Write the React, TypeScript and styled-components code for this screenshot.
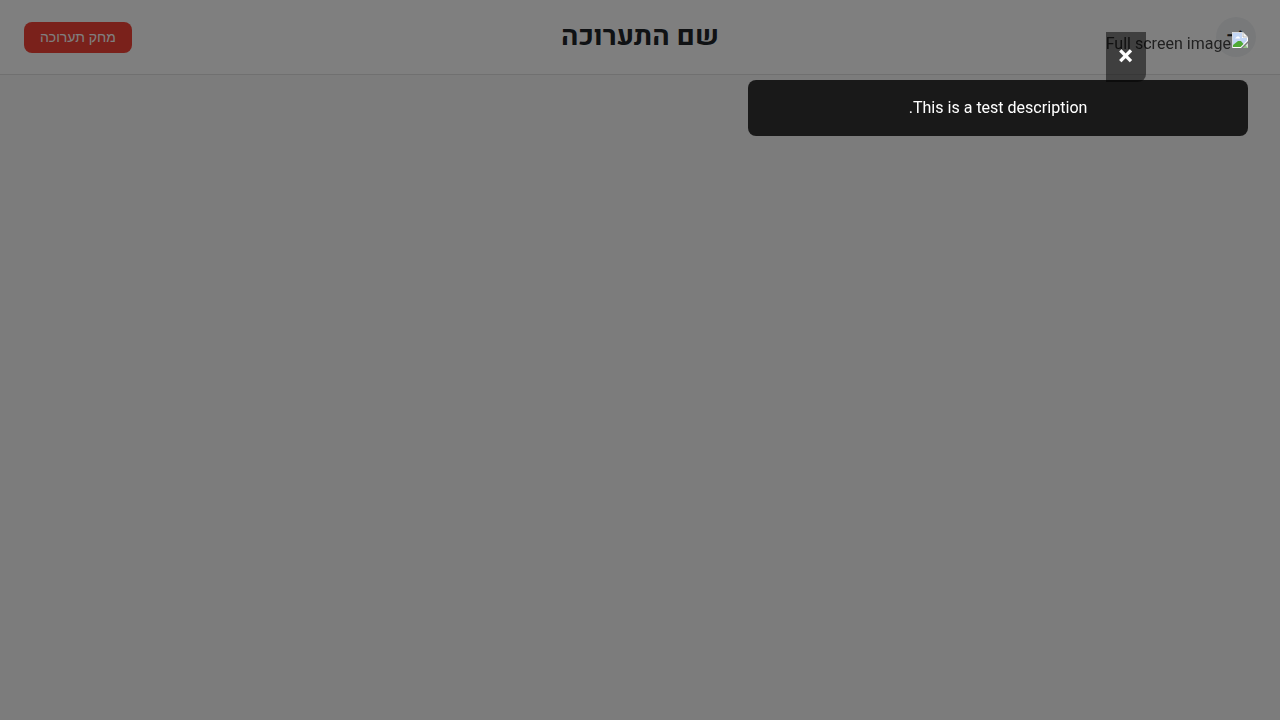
import React from "react";
import styled, { createGlobalStyle } from "styled-components";

const GlobalStyle = createGlobalStyle`
  *, *::before, *::after { box-sizing: border-box; }
  body {
    margin: 0;
    background: #f9f9f9;
    color: #212121;
    font-family: Heebo, Roboto, "Open Sans", sans-serif;
    font-size: 16px;
    line-height: 24px;
  }
`;

const Page = styled.div`
  min-height: 100vh;
`;

const Header = styled.header`
  display: grid;
  grid-template-columns: 1fr auto 1fr;
  align-items: center;
  padding: 17px 24px;
  background: #fff;
  border-bottom: 1px solid #e0e0e0;
`;

const BackButton = styled.button`
  display: flex;
  align-items: center;
  justify-content: center;
  justify-self: start;
  width: 40px;
  height: 40px;
  padding: 0 0 4px;
  border: 0;
  border-radius: 50%;
  background: #f1f3f5;
  color: #212529;
  font-family: "DejaVu Sans", sans-serif;
  font-size: 24px;
  line-height: 24px;
`;

const Title = styled.h1`
  margin: 0;
  color: #212529;
  font-size: 28px;
  font-weight: 700;
  line-height: 40px;
`;

const DeleteButton = styled.button`
  justify-self: end;
  padding: 8px 16px;
  border: 0;
  border-radius: 8px;
  background: #f44336;
  color: #fff;
  font-family: "Liberation Sans", sans-serif;
  font-size: 14px;
  line-height: 15px;
`;

const Overlay = styled.div`
  position: fixed;
  inset: 0;
  display: flex;
  flex-direction: column;
  align-items: flex-start;
  gap: 24px;
  padding: 32px;
  background: rgba(0, 0, 0, 0.5);
`;

const MissingImage = styled.div`
  position: relative;
  display: flex;
  align-items: flex-start;
  gap: 1px;
`;

const CloseButton = styled.button`
  position: absolute;
  top: 0;
  left: 0;
  z-index: 1;
  width: 40px;
  height: 50px;
  padding: 0 0 2px;
  border: 0;
  border-radius: 0 0 8px 0;
  background: rgba(0, 0, 0, 0.5);
  color: #fff;
  font-family: Roboto, sans-serif;
  font-size: 28px;
  font-weight: 700;
  line-height: 32px;
`;

const Description = styled.p`
  width: 100%;
  max-width: 500px;
  margin: 0;
  padding: 16px;
  border-radius: 8px;
  background: rgba(0, 0, 0, 0.8);
  color: #fff;
  text-align: center;
`;

const BrokenImageIcon = () => (
  <svg width="16" height="16" viewBox="0 0 16 16" aria-hidden="true">
    <path d="M0 0H11L16 5V9L9 16H0Z" fill="#fff" />
    <path d="M1 1H10V6H15V8.5L8.5 15H1Z" fill="#c3d6f5" />
    <path d="M3 6.5H8V6L7 4.5H5L4 5.5Z" fill="#fff" />
    <path d="M1 15V13L6 9H9L11.5 12L8.5 15Z" fill="#4faa35" />
    <path d="M11 0L16 5H11Z" fill="#f4f4f4" stroke="#a5a5a5" strokeWidth="0.7" />
    <path d="M16 11V16H11Z" fill="#d4dbd4" />
    <path d="M13 13L16 16H11Z" fill="#4faa35" opacity="0.5" />
    <path d="M0.5 16V0.5H11" fill="none" stroke="#b9bdc4" strokeWidth="0.6" />
  </svg>
);

export default function App() {
  return (
    <Page dir="rtl" lang="he">
      <GlobalStyle />
      <Header>
        <BackButton type="button" aria-label="חזרה">→</BackButton>
        <Title>שם התערוכה</Title>
        <DeleteButton type="button">מחק תערוכה</DeleteButton>
      </Header>
      <Overlay role="dialog" aria-modal="true">
        <MissingImage>
          <BrokenImageIcon />
          <span>Full screen image</span>
          <CloseButton type="button" aria-label="סגירה">×</CloseButton>
        </MissingImage>
        <Description>This is a test description.</Description>
      </Overlay>
    </Page>
  );
}
